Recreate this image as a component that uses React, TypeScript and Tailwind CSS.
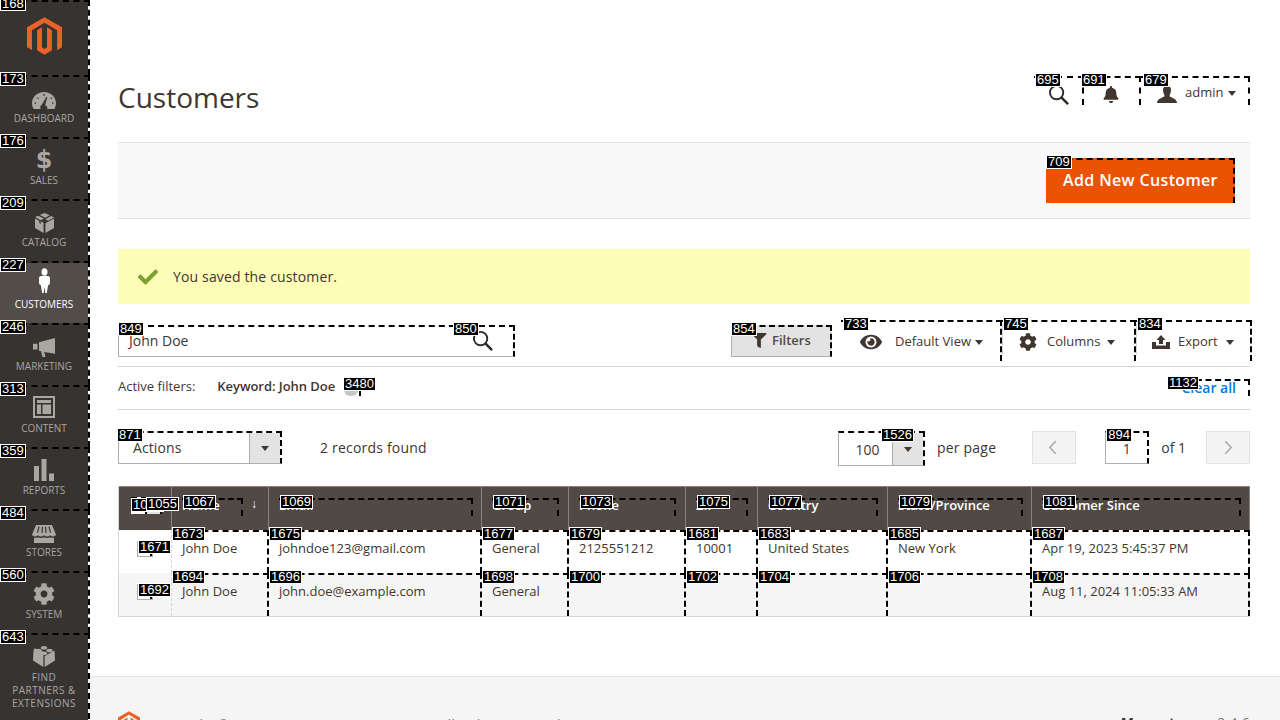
import type { ReactNode } from 'react'
import { FaBell, FaCheck, FaCog, FaEye, FaFilter } from 'react-icons/fa'

const dashed = 'border-t-2 border-r-2 border-dashed border-black'
// fields keep their real left and bottom edge under the dashed marks
const fieldEdge = 'border-b border-l border-b-[#adadad] border-l-[#adadad] [border-bottom-style:solid] [border-left-style:solid]'

function Tag({ n, className }: { n: number; className: string }) {
  return (
    <span
      className={`absolute z-20 h-[14px] whitespace-nowrap border border-white bg-black px-[1px] font-['Liberation_Sans',sans-serif] text-[13px] font-normal leading-[12px] tracking-normal text-white ${className}`}
    >
      {n}
    </span>
  )
}

function Caret({ className = '' }: { className?: string }) {
  return <span className={`inline-block h-0 w-0 border-x-[4px] border-t-[5px] border-x-transparent border-t-[#41362f] ${className}`} />
}

function SearchIcon({ className }: { className: string }) {
  return (
    <svg viewBox="0 0 22 22" className={className} fill="none" stroke="#2f2a26">
      <circle cx="9" cy="9" r="7" strokeWidth="2" />
      <path d="M14 14l7 7" strokeWidth="2.6" />
    </svg>
  )
}

function Logo({ className }: { className: string }) {
  return (
    <svg viewBox="0 0 250 291" className={className} fill="#e8622a">
      <path d="M125 0 0 72v144l36 21-1-144 90-52 90 52v144l35-21V72z" />
      <path d="M143 216l-18 11-18-11V72L72 93v144l53 31 53-31V93l-35-21z" />
    </svg>
  )
}

const navIcons: Record<string, ReactNode> = {
  DASHBOARD: (
    <svg viewBox="0 0 24 18" className="h-[17px] w-[24px]" fill="currentColor" preserveAspectRatio="none">
      <path fillRule="evenodd" d="M12 0C5 0 0 5.500 0 12c0 2.200.6 4.300 1.600 6h7.200a3.500 3.500 0 0 1 1-4.600L14.500 5l.9.4-2.400 8.500a3.500 3.500 0 0 1 2.200 4.100h7.200c1-1.700 1.600-3.800 1.600-6C24 5.500 19 0 12 0zM4 12.500H2.500v-1.500H4zm2-5L4.800 6.500l1-1L7 6.500zM12.700 4h-1.400V2.200h1.400zm6.700 3.500-1.100-1 1-1 1.100 1zM21.500 12.500H20v-1.500h1.500z" />
    </svg>
  ),
  SALES: <span className="font-['DejaVu_Sans',sans-serif] text-[24px] font-bold leading-[24px]">$</span>,
  CATALOG: (
    <svg viewBox="0 0 20 22" className="h-[20px] w-[19px]" fill="currentColor" preserveAspectRatio="none">
      <path d="M10 0 5 2.200l6 3 4.500-2.800zM3.200 3 0 4.500 6 8l3.500-2zM17 3.300 11 6.800l2.800 1.700L20 5zM0 6v10.500L9 22V10.800l-3-1.800v3L4.500 11V8.500zM20 6l-9 5.200V22l9-5.500z" />
    </svg>
  ),
  CUSTOMERS: (
    <svg viewBox="0 0 14 25" className="h-[25px] w-[11px]" fill="currentColor" preserveAspectRatio="none">
      <circle cx="7" cy="4" r="3.800" />
      <path d="M2.500 8h9C13 8 14 9 14 11l-.2 5-2.300 1.500L10 25H8l-1-6-1 6H4l-1.500-7.500L.2 16 0 11c0-2 1-3 2.500-3z" />
    </svg>
  ),
  MARKETING: (
    <svg viewBox="0 0 22 20" className="h-[19px] w-[22px]" fill="currentColor" preserveAspectRatio="none">
      <path d="M22 0 6 4.500v9l2 .4 1.500 6.100h3l-1.300-5.200L22 16.500zM0 6h4.500v6H0z" />
    </svg>
  ),
  CONTENT: (
    <svg viewBox="0 0 22 22" className="h-[22px] w-[22px]" fill="currentColor">
      <path fillRule="evenodd" d="M0 0h22v22H0zm2 2v18h18V2zm2 2h14v3H4zm0 4.500h4V18H4zm5.500 0H18V18H9.500z" />
    </svg>
  ),
  REPORTS: (
    <svg viewBox="0 0 20 22" className="h-[22px] w-[20px]" fill="currentColor">
      <path d="M0 7h5v15H0zM7.500 0h5v22h-5zM15 14.500h5V22h-5z" />
    </svg>
  ),
  STORES: (
    <svg viewBox="0 0 24 21" className="h-[18px] w-[24px]" fill="currentColor" preserveAspectRatio="none">
      <path d="M4 0h16l4 11.500c-.5 1.500-2 2-3 2s-2-.5-3-1.500c-1 1-2 1.500-3 1.500s-2-.5-3-1.500c-1 1-2 1.500-3 1.500S7 13 6 12c-1 1-2 1.500-3 1.500s-2.500-.5-3-2z" />
      <path d="M2 14.800c1.500.4 3 .2 4-.6 1.700 1.200 4.200 1.200 6 0 1.800 1.200 4.300 1.200 6 0 1 .8 2.500 1 4 .6V21H2z" />
      <path d="M7 2 5.500 9M10.500 2 10 9M13.500 2 14 9M17 2l1.500 7" stroke="#373330" strokeWidth="1.200" />
    </svg>
  ),
  SYSTEM: <FaCog className="h-[22px] w-[22px]" />,
  FIND: (
    <svg viewBox="0 0 24 24" className="h-[22px] w-[22px]" fill="currentColor">
      <path d="M12 7.500 2 3.500.5 6 0 17l11.300 7V12zM12.700 12v12L24 17 23.500 6z" />
      <ellipse cx="12" cy="3" rx="3.500" ry="2" />
      <ellipse cx="6" cy="6" rx="3.500" ry="2" />
      <ellipse cx="18" cy="6" rx="3.500" ry="2" />
      <ellipse cx="12" cy="9" rx="3.500" ry="2" />
    </svg>
  ),
}

const navItems = [
  { label: 'DASHBOARD', tag: 173, pad: 'pt-[15px]' },
  { label: 'SALES', tag: 176, pad: 'pt-[9px]' },
  { label: 'CATALOG', tag: 209, pad: 'pt-[12px]' },
  { label: 'CUSTOMERS', tag: 227, pad: 'pt-[5px]', active: true },
  { label: 'MARKETING', tag: 246, pad: 'pt-[13px]' },
  { label: 'CONTENT', tag: 313, pad: 'pt-[9px]' },
  { label: 'REPORTS', tag: 359, pad: 'pt-[10px]' },
  { label: 'STORES', tag: 484, pad: 'pt-[14px]' },
  { label: 'SYSTEM', tag: 560, pad: 'pt-[10px]' },
]

function Sidebar() {
  return (
    <aside className="relative z-10 w-[88px] shrink-0 bg-[#373330] text-[#aaa6a0]">
      <div className={`relative flex h-[75px] w-[90px] justify-center pt-[15px] ${dashed}`}>
        <Tag n={168} className="-top-[5px] left-0" />
        <Logo className="h-[41px] w-[35px]" />
      </div>
      {navItems.map((item) => (
        <div
          key={item.label}
          className={`relative h-[62px] w-[90px] ${dashed} ${item.active ? 'text-white' : ''}`}
        >
          {item.active && <div className="absolute inset-y-0 left-0 w-[88px] bg-[#524d49]" />}
          <Tag n={item.tag} className="-top-[5px] left-0" />
          <div className={`relative flex h-[34px] w-[88px] items-start justify-center ${item.pad}`}>{navIcons[item.label]}</div>
          <div className="relative w-[88px] text-center text-[10px] leading-[14px]">{item.label}</div>
        </div>
      ))}
      <div className={`relative h-[86px] w-[90px] ${dashed}`}>
        <Tag n={643} className="-top-[5px] left-0" />
        <div className="flex h-[34px] w-[88px] items-start justify-center pt-[10px]">{navIcons.FIND}</div>
        <div className="w-[88px] pt-[2px] text-center text-[10px] leading-[13px] tracking-[0.5px]">
          FIND
          <br />
          PARTNERS &amp;
          <br />
          EXTENSIONS
        </div>
      </div>
    </aside>
  )
}

function ToolbarMenu({ tag, width, icon, label, tagLeft, caret, divider }: { tag: number; width: string; icon: ReactNode; label: string; tagLeft: string; caret: string; divider?: boolean }) {
  return (
    <div className={`relative flex h-[41px] items-center ${width} ${dashed}`}>
      <Tag n={tag} className={`-top-[5px] ${tagLeft}`} />
      {divider && <span className="absolute bottom-[6px] left-0 top-[2px] w-px bg-[#d5d5d5]" />}
      {icon}
      <span className="text-[13px] text-[#41362f]">{label}</span>
      <Caret className={`absolute top-[18px] ${caret}`} />
    </div>
  )
}

const columns = [
  { title: 'Name', tag: 1067, box: 'w-[61px]', width: 'w-[97px]' },
  { title: 'Email', tag: 1069, box: 'w-[194px]', width: 'w-[213px]' },
  { title: 'Group', tag: 1071, box: 'w-[67px]', width: 'w-[87px]' },
  { title: 'Phone', tag: 1073, box: 'w-[97px]', width: 'w-[117px]' },
  { title: 'ZIP', tag: 1075, box: 'w-[52px]', width: 'w-[72px]' },
  { title: 'Country', tag: 1077, box: 'w-[110px]', width: 'w-[130px]' },
  { title: 'State/Province', tag: 1079, box: 'w-[125px]', width: 'w-[144px]' },
  { title: 'Customer Since', tag: 1081, box: 'w-[199px]', width: 'w-[218px]' },
]

const rows = [
  {
    tag: 1671,
    cells: [
      [1673, 'John Doe'],
      [1675, 'johndoe123@gmail.com'],
      [1677, 'General'],
      [1679, '2125551212'],
      [1681, '10001'],
      [1683, 'United States'],
      [1685, 'New York'],
      [1687, 'Apr 19, 2023 5:45:37 PM'],
    ],
  },
  {
    tag: 1692,
    cells: [
      [1694, 'John Doe'],
      [1696, 'john.doe@example.com'],
      [1698, 'General'],
      [1700, ''],
      [1702, ''],
      [1704, ''],
      [1706, ''],
      [1708, 'Aug 11, 2024 11:05:33 AM'],
    ],
  },
]

function CustomerTable() {
  return (
    <div className="border-b border-l border-[#d6d6d6]">
      <table className="w-full table-fixed border-separate border-spacing-0 text-[13px] text-[#41362f]">
        <thead>
          <tr className="h-[44px] bg-[#514943] text-white">
            <th className="relative w-[53px] border-r border-t border-[#8a837f] p-0 align-top">
              <div className="ml-[12px] mt-[10px] flex h-[17px]">
                <span className={`h-[17px] w-[16px] bg-white ${dashed}`} />
                <span className={`h-[17px] w-[15px] bg-[#e3e3e3] ${dashed}`} />
              </div>
              <Tag n={1054} className="left-[12px] top-[11px]" />
              <Tag n={1055} className="left-[27px] top-[10px]" />
            </th>
            {columns.map((col, i) => (
              <th key={col.tag} className={`relative ${col.width} border-r border-t border-[#8a837f] p-0 pl-[10px] text-left align-top font-semibold`}>
                <div className={`relative mt-[11px] h-[18px] text-[13px] leading-[10px] ${col.box} ${dashed}`}>
                  <Tag n={col.tag} className="left-px -top-[5px]" />
                  {col.title}
                </div>
                {i === 0 && <span className="absolute left-[79px] top-[10px] text-[12px] font-normal leading-[14px]">↓</span>}
              </th>
            ))}
          </tr>
        </thead>
        <tbody>
          {rows.map((row, r) => (
            <tr key={row.tag} className={`h-[43px] ${r === 1 ? 'bg-[#f5f5f5]' : ''}`}>
              <td className="relative border-r border-dashed border-[#d6d6d6] p-0">
                <span className="absolute left-[18px] top-[11px] h-[16px] w-[16px] border border-[#adadad] bg-white" />
                <span className="absolute left-[31px] top-[24px] h-[2px] w-[2px] bg-black" />
                <Tag n={row.tag} className="left-[19px] top-[10px]" />
              </td>
              {row.cells.map(([tag, text]) => (
                <td key={tag} className={`relative h-[43px] p-0 pb-[8px] pl-[10px] ${dashed}`}>
                  <Tag n={tag as number} className="left-0 -top-[5px]" />
                  <span className="whitespace-nowrap">{text}</span>
                </td>
              ))}
            </tr>
          ))}
        </tbody>
      </table>
    </div>
  )
}

export default function App() {
  return (
    <div className="flex h-[720px] w-[1280px] overflow-hidden bg-white font-['Open_Sans',sans-serif] text-[#41362f]">
      <Sidebar />
      <main className="min-w-0 flex-1">
        <div className="px-[30px] pt-[76px]">
          <header className="flex h-[66px] items-start justify-between">
            <h1 className="text-[28px] font-normal leading-[42px] text-[#41362f]">Customers</h1>
            <div className="flex h-[29px] items-start">
              <div className={`relative h-[29px] w-[50px] ${dashed}`}>
                <Tag n={695} className="-top-[5px] left-[1px]" />
                <SearchIcon className="absolute left-[14px] top-[6px] h-[21px] w-[21px]" />
              </div>
              <div className={`relative h-[29px] w-[57px] ${dashed}`}>
                <Tag n={691} className="-left-[3px] -top-[5px]" />
                <FaBell className="absolute left-[19px] top-[8px] h-[17px] w-[16px] text-[#41362f]" />
              </div>
              <div className={`relative h-[29px] w-[109px] ${dashed}`}>
                <Tag n={679} className="left-[2px] -top-[5px]" />
                <svg viewBox="0 0 20 17" className="absolute left-[16px] top-[8px] h-[17px] w-[20px]" fill="#41362f">
                  <path d="M6 4a4 4 0 0 1 8 0c0 3-1.500 5-1.500 6 0 1.500 7.500 2 7.500 7H0c0-5 7.500-5.500 7.500-7C7.500 9 6 7 6 4z" />
                </svg>
                <span className="absolute left-[44px] top-[5px] text-[13px] leading-[18px]">admin</span>
                <Caret className="absolute left-[87px] top-[13px]" />
              </div>
            </div>
          </header>

          <div className="flex h-[77px] items-start justify-end border-y border-[#e3e3e3] bg-[#f8f8f8] pr-[15px] pt-[15px]">
            <div className={`relative flex h-[45px] w-[189px] items-center justify-center bg-[#eb5202] pb-[3px] pl-[2px] text-[16px] font-semibold tracking-[0.35px] text-white ${dashed}`}>
              <Tag n={709} className="-top-[5px] left-0" />
              Add New Customer
            </div>
          </div>

          <div className="mt-[30px] flex h-[55px] items-center gap-[15px] bg-[#fdfdb8] pl-[20px] text-[14px] text-[#41362f]">
            <FaCheck className="h-[20px] w-[20px] text-[#79a22e]" />
            <span className="tracking-[0.15px]">You saved the customer.</span>
          </div>

          <div className="mt-[16px] flex h-[47px] items-start justify-between border-b border-[#d5d5d5]">
            <div className={`relative mt-[5px] flex h-[32px] w-[397px] items-center pb-[2px] pl-[10px] text-[14px] ${dashed} ${fieldEdge}`}>
              <Tag n={849} className="-left-[1px] -top-[5px]" />
              <Tag n={850} className="left-[334px] -top-[5px]" />
              John Doe
              <SearchIcon className="absolute left-[353px] top-[3px] h-[21px] w-[21px]" />
            </div>
            <div className="-mr-[2px] flex items-start">
              <div className={`relative mr-[9px] mt-[5px] flex h-[32px] w-[101px] items-center bg-[#e3e3e3] pb-[2px] pl-[19px] text-[13px] font-semibold text-[#514943] ${dashed} ${fieldEdge}`}>
                <Tag n={854} className="-left-px -top-[5px]" />
                <FaFilter className="mr-[5px] h-[15px] w-[16px] text-[#41362f]" />
                Filters
              </div>
              <ToolbarMenu
                tag={733}
                width="w-[161px]"
                tagLeft="left-[2px]"
                label="Default View"
                caret="left-[134px]"
                icon={<FaEye className="ml-[19px] mr-[13px] h-[22px] w-[22px] text-[#41362f]" />}
              />
              <ToolbarMenu
                tag={745}
                width="w-[134px]"
                tagLeft="left-px"
                label="Columns"
                caret="left-[105px]"
                divider
                icon={<FaCog className="ml-[17px] mr-[10px] h-[18px] w-[18px] text-[#41362f]" />}
              />
              <ToolbarMenu
                tag={834}
                width="w-[116px]"
                tagLeft="left-px"
                label="Export"
                caret="left-[90px]"
                divider
                icon={
                  <svg viewBox="0 0 18 14" className="ml-[16px] mr-[8px] h-[14px] w-[18px]" fill="#41362f">
                    <path d="M9 0l4.500 5H11v4H7V5H4.500zM0 7h4v3.500h10V7h4v7H0z" />
                  </svg>
                }
              />
            </div>
          </div>

          <div className="flex h-[43px] items-start border-b border-[#d5d5d5] text-[13px]">
            <span className="mt-[10px] leading-[18px]">Active filters:</span>
            <span className="ml-[22px] mt-[10px] font-semibold leading-[18px] tracking-[-0.05px]">Keyword: John Doe</span>
            <div className="relative ml-[9px] mt-[23px] h-[6px] w-[16px]">
              <span className="absolute left-0 top-[-6px] h-[12px] w-[14px] rounded-full bg-[#c9c7c5]" />
              <span className="absolute left-[15px] top-0 h-[6px] w-[2px] bg-black" />
              <Tag n={3480} className="-left-[1px] -top-[13px]" />
            </div>
            <div className={`relative ml-auto mt-[12px] h-[17px] w-[83px] text-right ${dashed}`}>
              <span className="absolute right-[12px] top-[-2px] text-[14px] font-semibold leading-[18px] text-[#007bdb]">Clear all</span>
              <Tag n={1132} className="left-0 -top-[5px]" />
            </div>
          </div>

          <div className="flex h-[76px] items-start pt-[21px] text-[14px]">
            <div className={`relative flex h-[33px] w-[164px] items-center pb-[2px] pl-[14px] tracking-[0.1px] ${dashed} ${fieldEdge}`}>
              <Tag n={871} className="-left-[2px] -top-[5px]" />
              Actions
              <span className="absolute bottom-0 right-0 top-0 flex w-[31px] items-center justify-center border-l border-[#adadad] bg-[#e3e3e3]">
                <Caret />
              </span>
            </div>
            <span className="ml-[38px] mt-[7px] leading-[20px] tracking-[0.2px]">2 records found</span>
            <div className="ml-auto flex items-start">
              <div className={`relative flex h-[35px] w-[87px] ${dashed} ${fieldEdge}`}>
                <span className="flex w-[54px] items-center justify-center border-r border-[#adadad] pl-[4px]">100</span>
                <span className="flex flex-1 items-center justify-center bg-[#e3e3e3]">
                  <Caret />
                </span>
                <Tag n={1526} className="left-[42px] -top-[5px]" />
              </div>
              <span className="ml-[12px] mt-[7px] leading-[20px] tracking-[0.2px]">per page</span>
              <div className="ml-[36px] flex h-[33px] w-[44px] items-center justify-center border border-[#e3e3e3] bg-[#f4f4f4] pr-[3px]">
                <svg viewBox="0 0 10 16" className="h-[15px] w-[9px]" fill="none" stroke="#a8a5a2" strokeWidth="1.600">
                  <path d="M8.500 1 2 8l6.500 7" />
                </svg>
              </div>
              <div className={`relative ml-[29px] flex h-[33px] w-[44px] items-center justify-center ${dashed} ${fieldEdge}`}>
                <Tag n={894} className="left-0 -top-[5px]" />1
              </div>
              <span className="ml-[12px] mt-[7px] leading-[20px]">of 1</span>
              <div className="ml-[20px] flex h-[33px] w-[44px] items-center justify-center border border-[#e3e3e3] bg-[#f4f4f4]">
                <svg viewBox="0 0 10 16" className="h-[15px] w-[9px]" fill="none" stroke="#a8a5a2" strokeWidth="1.600">
                  <path d="M1.500 1 8 8l-6.500 7" />
                </svg>
              </div>
            </div>
          </div>

          <CustomerTable />
        </div>

        <footer className="mt-[59px] flex h-[60px] items-start justify-between border-t border-[#e3e3e3] bg-[#f5f5f5] px-[30px] pt-[34px] text-[14px] tracking-[0.25px]">
          <div className="flex items-center">
            <Logo className="mr-[8px] h-[26px] w-[22px]" />
            <span className="text-[#7c7672]">Copyright © 2024 Magento Commerce Inc. All rights reserved.</span>
          </div>
          <span className="mt-[1px] text-[#7c7672]">
            <b className="font-bold text-[#41362f]">Magento</b> ver. 2.4.6
          </span>
        </footer>
      </main>
    </div>
  )
}
